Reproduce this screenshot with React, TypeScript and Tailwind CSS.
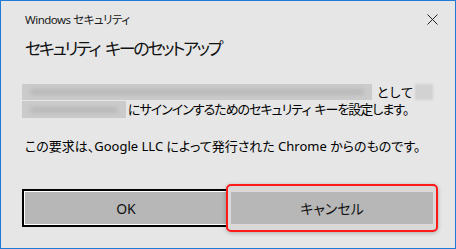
import React from "react";

const font = "font-['Noto_Sans','Noto_Sans_CJK_JP',sans-serif] [font-feature-settings:'palt']";

const Blur = ({ w, h }: { w: number; h: number }) => (
  <div
    className="bg-[#cbcbcb] flex flex-col justify-center px-[8px] overflow-hidden"
    style={{ width: w, height: h }}
  >
    <div className="h-[6px] bg-[#b8b8b8] blur-[2px] rounded-full" />
  </div>
);

export default function App() {
  return (
    <div className={`w-[456px] h-[249px] bg-[#e6e6e6] border border-[#1c7bd6] flex flex-col text-[#000] ${font}`}>
      <div className="flex items-center justify-between h-[36px] pl-[24px] pr-[17px] pt-[1px]">
        <span className="text-[11.5px] tracking-[-0.5px] text-[#1a1a1a]">Windows セキュリティ</span>
        <svg width="11" height="11" viewBox="0 0 11 11" className="text-[#222] -mt-[1px]">
          <path d="M0.5 0.5 L10.5 10.5 M10.5 0.5 L0.5 10.5" stroke="currentColor" strokeWidth="1" />
        </svg>
      </div>

      <div className="pl-[24px] h-[22px] flex items-center">
        <h1 className="text-[17px] tracking-[-2.3px] leading-none text-[#111]">
          セキュリティ<span className="inline-block w-[6px]" />キーのセットアップ
        </h1>
      </div>

      <div className="pl-[21px] mt-[25px] flex flex-col text-[13px] leading-none whitespace-nowrap">
        <div className="flex items-center h-[16px]">
          <Blur w={350} h={16} />
          <span className="ml-[5px] tracking-[1px]">として</span>
          <div className="ml-[1px] w-[18px] h-[16px] bg-[#d2d2d2] blur-[1px]" />
        </div>
        <div className="flex items-center h-[17px] mt-[1px]">
          <Blur w={104} h={17} />
          <span className="ml-[2px] tracking-[-1px]">
            にサインインするためのセキュリティ<span className="inline-block w-[4px]" />キーを設定します。
          </span>
        </div>
        <div className="flex items-center h-[17px] mt-[20px] pl-[3px]">
          <span>この要求は、Google LLC によって発行された Chrome からのものです。</span>
        </div>
      </div>

      <div className="flex items-center pl-[21px] mt-[29px]">
        <button className="w-[208px] h-[38px] border-2 border-black bg-[#b7b7b7] shadow-[inset_0_0_0_1px_#ffffff] text-[14px] text-[#111]">
          OK
        </button>
        <div className="-ml-[4px] w-[212px] h-[48px] rounded-[5px] border-2 border-[#ff1a1a] bg-[#d9d9d9] shadow-[0_1px_4px_rgba(0,0,0,0.25)] p-[3px]">
          <button className="w-full h-[32px] mt-[3px] bg-[#b7b7b7] text-[14px] text-[#111]">キャンセル</button>
        </div>
      </div>
    </div>
  );
}
